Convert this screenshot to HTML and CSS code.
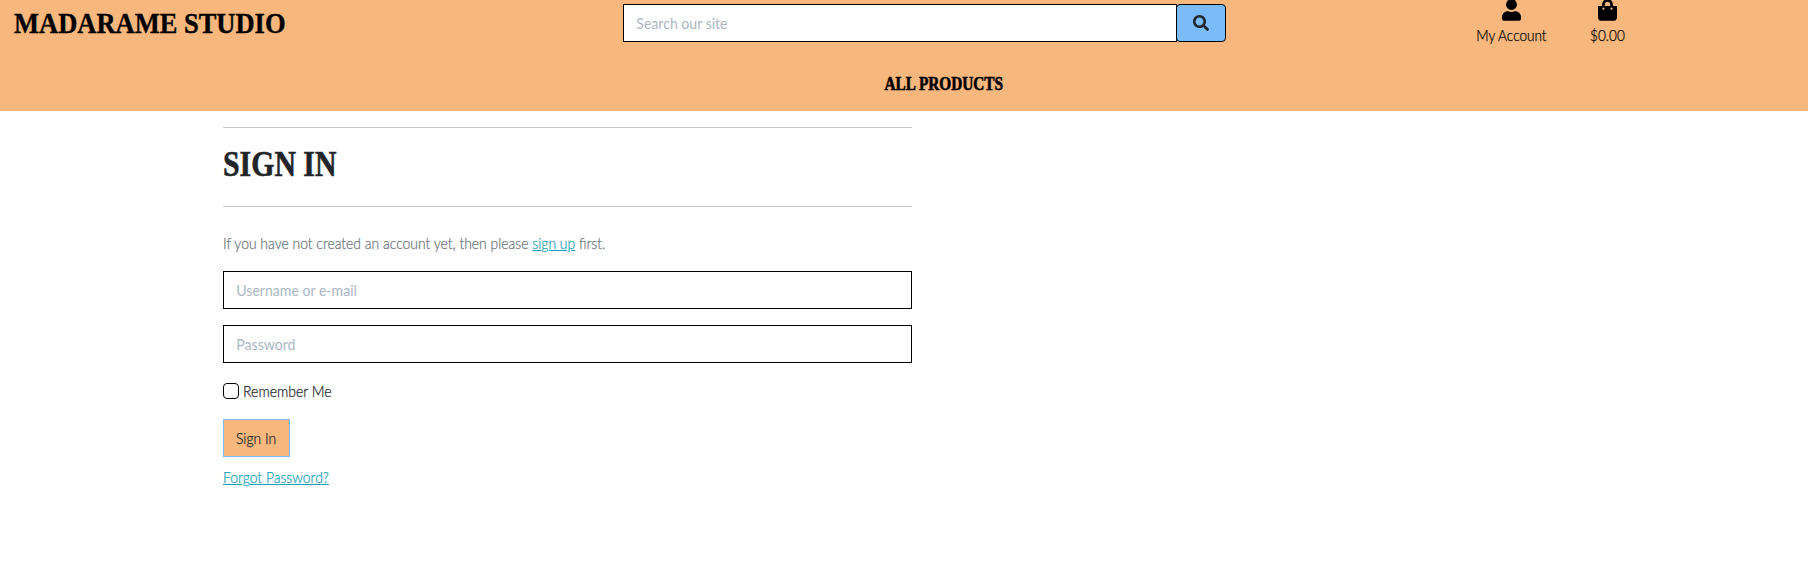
FILE: index.html
```html
<!DOCTYPE html>
<html lang="en">
<head>
<meta charset="utf-8">
<title>Madarame Studio - Sign In</title>
<link rel="stylesheet" href="styles.css">
</head>
<body>
<header class="site-header">
  <div class="topbar">
    <a class="brand" href="#"><span class="brand-text">MADARAME STUDIO</span></a>
    <form class="search">
      <div class="field search-field"><input type="text" placeholder="Search our site" aria-label="Search"></div>
      <button class="search-btn" type="button" aria-label="Search">
        <svg width="16" height="16" viewBox="0 0 512 512"><path fill="#212529" d="M505 442.700L405.300 343c-4.500-4.500-10.600-7-17-7H372c27.600-35.300 44-79.700 44-128C416 93.100 322.900 0 208 0S0 93.100 0 208s93.100 208 208 208c48.300 0 92.700-16.400 128-44v16.300c0 6.400 2.500 12.500 7 17l99.700 99.700c9.400 9.400 24.600 9.400 33.900 0l28.300-28.300c9.400-9.400 9.400-24.600.1-34zM208 336c-70.700 0-128-57.200-128-128 0-70.700 57.200-128 128-128 70.700 0 128 57.200 128 128 0 70.700-57.200 128-128 128z"/></svg>
      </button>
    </form>
    <nav class="tools">
      <a class="tool account" href="#">
        <svg width="19" height="22" viewBox="0 0 448 512"><path d="M224 256c70.700 0 128-57.300 128-128S294.700 0 224 0 96 57.300 96 128s57.300 128 128 128zm89.600 32h-16.700c-22.200 10.200-46.900 16-72.900 16s-50.600-5.800-72.900-16h-16.700C60.200 288 0 348.200 0 422.400V464c0 26.500 21.500 48 48 48h352c26.500 0 48-21.500 48-48v-41.600c0-74.200-60.200-134.400-134.400-134.400z"/></svg>
        <span class="tool-label">My Account</span>
      </a>
      <a class="tool bag" href="#">
        <svg width="19" height="22" viewBox="0 0 448 512"><path d="M352 160v-32C352 57.420 294.579 0 224 0 153.420 0 96 57.420 96 128v32H0v272c0 44.183 35.817 80 80 80h288c44.183 0 80-35.817 80-80V160h-96zm-192-32c0-35.290 28.710-64 64-64s64 28.710 64 64v32H160v-32zm160 120c-13.255 0-24-10.745-24-24s10.745-24 24-24 24 10.745 24 24-10.745 24-24 24zm-192 0c-13.255 0-24-10.745-24-24s10.745-24 24-24 24 10.745 24 24-10.745 24-24 24z"/></svg>
        <span class="tool-label">$0.00</span>
      </a>
    </nav>
  </div>
  <nav class="mainnav"><a href="#">ALL PRODUCTS</a></nav>
</header>
<main class="content">
  <hr>
  <h2 class="title"><span>SIGN IN</span></h2>
  <hr>
  <p class="intro"><span class="narrow">If you have not created an account yet, then please <a class="link" href="#">sign up</a> first.</span></p>
  <form class="login">
    <div class="field"><input type="text" placeholder="Username or e-mail" aria-label="Username or e-mail"></div>
    <div class="field"><input type="password" placeholder="Password" aria-label="Password"></div>
    <label class="remember"><input type="checkbox"><span class="narrow">Remember Me</span></label>
    <button class="submit" type="button"><span class="narrow">Sign In</span></button>
    <a class="link forgot" href="#"><span class="narrow">Forgot Password?</span></a>
  </form>
</main>
</body>
</html>
```
FILE: styles.css
```css
* { box-sizing: border-box; }

body {
  margin: 0;
  background: #fff;
  color: #212529;
  font: 300 16px/24px Lato, sans-serif;
}

a { color: #000; text-decoration: none; }

.site-header {
  height: 111px;
  background: #f8b77d;
  color: #000;
  overflow: hidden;
}

.topbar {
  display: grid;
  grid-template-columns: 623px 603px 1fr;
  height: 67px;
}

.brand {
  padding: 6px 0 0 14px;
  font: 700 30px/34px "Liberation Serif", serif;
}

.brand-text {
  display: inline-block;
  white-space: nowrap;
  transform: scaleX(0.883);
  transform-origin: left;
  -webkit-text-stroke: 0.4px #000;
}

.search { display: flex; height: 38px; margin-top: 4px; }
.search-field { flex: 1; }

.field {
  height: 38px;
  border: 1px solid #000;
  background: #fff;
  overflow: hidden;
}

.search .search-field { margin-right: -1px; }

/* Condenses the typed text while the frame keeps its own width. */
.field input {
  display: block;
  width: 113.6%;
  height: 36px;
  padding: 0 0 2px 14px;
  border: 0;
  outline: 0;
  background: transparent;
  font: 400 16px/24px Lato, sans-serif;
  transform: scaleX(0.88);
  transform-origin: left;
}

.field input::placeholder { color: #aab7c4; opacity: 1; }

.search-btn {
  display: flex;
  align-items: center;
  justify-content: center;
  width: 50px;
  padding: 0 1px 0 0;
  border: 1px solid #000;
  border-radius: 4px;
  background: #7cbbfa;
}

.tools { display: flex; padding-left: 250px; }

.tool {
  display: flex;
  flex-direction: column;
  align-items: center;
  width: 70px;
  margin-top: -1px;
}

.bag { margin-left: 26px; }
.tool svg { flex: none; }

.tool-label {
  margin-top: 2px;
  white-space: nowrap;
  transform: scaleX(0.85);
  -webkit-text-stroke: 0.25px currentColor;
}

.mainnav {
  display: flex;
  justify-content: center;
  padding-left: 80px;
  font: 700 18px/34px "Liberation Serif", serif;
}

.mainnav a {
  transform: scaleX(0.85);
  -webkit-text-stroke: 0.6px #000;
}

.content {
  width: 689px;
  margin-left: 223px;
  padding-top: 16px;
}

hr {
  height: 1px;
  margin: 0;
  border: 0;
  background: #c8c8c8;
}

.title {
  height: 78px;
  margin: 0;
  padding-top: 16px;
  font: 700 35px/42px "Liberation Serif", serif;
}

.title span {
  display: inline-block;
  transform: scaleX(0.852);
  transform-origin: left;
  -webkit-text-stroke: 0.6px #212529;
}

.narrow {
  display: inline-block;
  white-space: nowrap;
  transform: scaleX(0.87);
  transform-origin: left;
  -webkit-text-stroke: 0.25px currentColor;
}

.intro { margin: 24px 0 16px; color: #6c757d; }
.link { color: #17a2b8; text-decoration: underline; }
.link .narrow { text-decoration: underline; }

.login {
  display: flex;
  flex-direction: column;
  align-items: flex-start;
}

.login .field { width: 100%; margin-bottom: 16px; }

.remember {
  display: flex;
  height: 24px;
  align-items: center;
  gap: 4px;
  margin-bottom: 16px;
}

.remember .narrow { transform: scaleX(0.877); }

.remember input {
  appearance: none;
  width: 16px;
  height: 16px;
  margin: 0;
  border: 1px solid #000;
  border-radius: 4px;
  background: #fff;
}

.submit {
  width: 67px;
  height: 38px;
  padding: 0 0 0 12px;
  border: 1px solid #7cbbfa;
  background: #f8b77d;
  color: #212529;
  text-align: left;
  font: 300 16px/24px Lato, sans-serif;
}

.forgot { margin-top: 8px; }
```
